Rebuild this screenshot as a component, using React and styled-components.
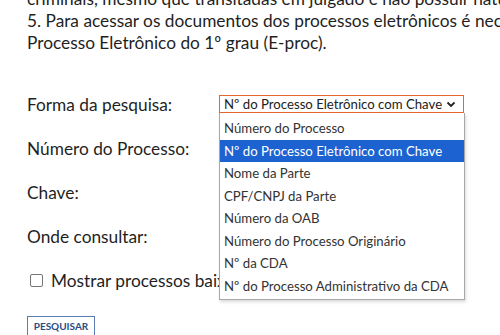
import React from 'react';
import styled, { createGlobalStyle } from 'styled-components';

const GlobalStyle = createGlobalStyle`
    html, body {
        margin: 0;
        padding: 0;
        overflow: hidden;
        background: #fff;
    }
    body {
        font-family: Lato, 'Liberation Sans', sans-serif;
        color: #1f1f1f;
    }
`
const Page = styled.div`
    width: 500px;
    height: 335px;
    overflow: hidden;
    padding-left: 27px;
    box-sizing: border-box;
`
const Notice = styled.p`
    margin: -12px 0 0;
    font-size: 17.3px;
    line-height: 22px;
    white-space: nowrap;
`
const Form = styled.form`
    margin-top: 28px;
    display: flex;
    flex-direction: column;
`
const Row = styled.div`
    height: 44px;
    display: grid;
    grid-template-columns: 192px 1fr;
    align-items: center;
`
const Label = styled.label`
    font-size: 17.3px;
`
const SelectWrap = styled.div`
    position: relative;
    width: 245px;
`
const SelectBox = styled.div`
    height: 18px;
    box-sizing: border-box;
    border: 1px solid #e9652e;
    display: flex;
    align-items: center;
    justify-content: space-between;
    gap: 2px;
    padding: 0 7px 0 4px;
    font-size: 13.2px;
    white-space: nowrap;
    color: #222;
    background: #fff;
    span {
        overflow: hidden;
    }
    svg {
        flex-shrink: 0;
    }
`
const Options = styled.ul`
    position: absolute;
    top: 18px;
    left: 0;
    width: 244px;
    margin: 0;
    padding: 4px 0 2px;
    list-style: none;
    background: #fff;
    border: 1px solid #a8a8a8;
    border-top: none;
    box-shadow: 1px 2px 3px rgba(0, 0, 0, 0.15);
    z-index: 2;
`
const Option = styled.li`
    height: 22.5px;
    line-height: 22.5px;
    padding-left: 4px;
    font-size: 13.2px;
    white-space: nowrap;
    color: ${p => (p.$active ? '#fff' : '#333')};
    background: ${p => (p.$active ? '#1c63d1' : 'transparent')};
`
const CheckRow = styled.div`
    height: 44px;
    display: flex;
    align-items: center;
    gap: 8px;
    font-size: 17.3px;
    white-space: nowrap;
`
const Check = styled.span`
    width: 11px;
    height: 11px;
    margin-left: 3px;
    border: 1px solid #767676;
    border-radius: 2px;
    background: #fff;
`
const Button = styled.button`
    align-self: flex-start;
    margin-top: 14px;
    width: 68px;
    height: 24px;
    padding: 3px 0 0;
    font-family: Lato, 'Liberation Sans', sans-serif;
    font-size: 10px;
    font-weight: bold;
    color: #2b4c84;
    background: #fff;
    border: 1px solid #5b7cb2;
    display: flex;
    align-items: flex-start;
    justify-content: center;
`

const options = [
    'Número do Processo',
    'Nº do Processo Eletrônico com Chave',
    'Nome da Parte',
    'CPF/CNPJ da Parte',
    'Número da OAB',
    'Número do Processo Originário',
    'Nº da CDA',
    'Nº do Processo Administrativo da CDA',
];

const Chevron = () => (
    <svg width="10" height="7" viewBox="0 0 10 7">
        <path d="M1.5 1.5 L5 5 L8.5 1.5" fill="none" stroke="#222" strokeWidth="1.8" />
    </svg>
);

const App = () => {
    return (
        <Page>
            <GlobalStyle />
            <Notice>
                criminais, mesmo que transitadas em julgado e não possuir natureza sigilosa.<br />
                5. Para acessar os documentos dos processos eletrônicos é necessário consultar o sistema de<br />
                Processo Eletrônico do 1º grau (E-proc).
            </Notice>

            <Form>
                <Row>
                    <Label>Forma da pesquisa:</Label>
                    <SelectWrap>
                        <SelectBox>
                            <span>Nº do Processo Eletrônico com Chave</span>
                            <Chevron />
                        </SelectBox>
                        <Options>
                            {options.map((o, i) => (
                                <Option key={o} $active={i === 1}>{o}</Option>
                            ))}
                        </Options>
                    </SelectWrap>
                </Row>
                <Row><Label>Número do Processo:</Label></Row>
                <Row><Label>Chave:</Label></Row>
                <Row><Label>Onde consultar:</Label></Row>
                <CheckRow>
                    <Check />
                    Mostrar processos baixados
                </CheckRow>
                <Button type="button">PESQUISAR</Button>
            </Form>
        </Page>
    );
}

export default App;
